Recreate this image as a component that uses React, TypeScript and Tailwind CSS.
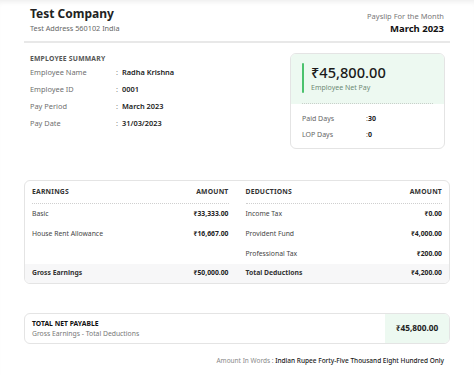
import React from 'react';

const font = { fontFamily: '"Noto Sans", "Open Sans", sans-serif' };

const summary = [
  ['Employee Name', 'Radha Krishna'],
  ['Employee ID', '0001'],
  ['Pay Period', 'March 2023'],
  ['Pay Date', '31/03/2023'],
];

const earnings = [
  ['Basic', '₹33,333.00'],
  ['House Rent Allowance', '₹16,667.00'],
];

const deductions = [
  ['Income Tax', '₹0.00'],
  ['Provident Fund', '₹4,000.00'],
  ['Professional Tax', '₹200.00'],
];

function Column({ title, rows }: { title: string; rows: string[][] }) {
  return (
    <div>
      <div className="h-[23px] pt-[1px] flex items-center justify-between border-b border-dotted border-[#cfcfcf] text-[6.8px] font-bold text-[#333] tracking-[0.2px]">
        <span>{title}</span>
        <span>AMOUNT</span>
      </div>
      {rows.map(([label, value]) => (
        <div key={label} className="h-[20px] flex items-center justify-between text-[6.8px]">
          <span className="text-[#444]">{label}</span>
          <span className="font-bold text-[#222]">{value}</span>
        </div>
      ))}
    </div>
  );
}

export default function App() {
  return (
    <div
      className="w-[474px] h-[375px] bg-white overflow-hidden shadow-[inset_0_5px_5px_-3px_rgba(0,0,0,0.07)]"
      style={font}
    >
      <div className="px-6 pt-[6px]">
        {/* Header */}
        <div className="flex justify-between items-start px-[6px] pb-[6px] border-b-2 border-[#e8e8e8]">
          <div>
            <div className="text-[12px] font-bold text-[#222] leading-[15px]">Test Company</div>
            <div className="text-[7.3px] text-[#666] leading-[10px] mt-[2px]">Test Address 560102 India</div>
          </div>
          <div className="text-right pt-[5px]">
            <div className="text-[7.5px] text-[#777] leading-[10px]">Payslip For the Month</div>
            <div className="text-[9.5px] font-bold text-[#111] leading-[13px] mt-[1px]">March 2023</div>
          </div>
        </div>

        {/* Summary + net pay */}
        <div className="flex justify-between mt-[10px] pl-[6px] pr-[5px]">
          <div className="pt-[1px]">
            <div className="text-[6.8px] font-bold text-[#555] tracking-[0.2px] leading-[10px]">EMPLOYEE SUMMARY</div>
            <div>
              {summary.map(([label, value]) => (
                <div key={label} className="flex items-center h-[17px] text-[7.4px]">
                  <span className="w-[86px] text-[#6f6f6f]">{label}</span>
                  <span className="text-[#888] w-[6px]">:</span>
                  <span className="text-[#222] font-semibold">{value}</span>
                </div>
              ))}
            </div>
          </div>

          <div className="w-[155px] h-[96px] border border-[#e4e4e4] rounded-[6px] overflow-hidden">
            <div className="bg-[#edf9f1] px-[11px] pt-[9px]">
              <div className="flex">
                <div className="w-[2px] bg-[#4cc26e] rounded-full mr-[7px]" />
                <div>
                  <div className="text-[14.6px] font-medium text-[#1a1a1a] leading-[18px]">₹45,800.00</div>
                  <div className="text-[7px] text-[#6d8a76] leading-[10px] mt-[2px]">Employee Net Pay</div>
                </div>
              </div>
              <div className="mt-[10px] border-b border-dotted border-[#c8cfca]" />
            </div>
            <div className="px-[11px] pt-[7px]">
              {[['Paid Days', '30'], ['LOP Days', '0']].map(([l, v]) => (
                <div key={l} className="flex items-center h-[16px] text-[7px]">
                  <span className="w-[64px] text-[#666]">{l}</span>
                  <span className="text-[#666]">:</span>
                  <span className="font-bold text-[#222]">{v}</span>
                </div>
              ))}
            </div>
          </div>
        </div>

        {/* Earnings / Deductions */}
        <div className="mt-[31px] border border-[#e4e4e4] rounded-[6px] overflow-hidden">
          <div className="grid grid-cols-2 gap-[17px] px-[7px]">
            <Column title="EARNINGS" rows={earnings} />
            <Column title="DEDUCTIONS" rows={deductions} />
          </div>
          <div className="grid grid-cols-2 gap-[17px] px-[7px] bg-[#f7f7f8] h-[19px] items-center text-[6.8px] font-bold text-[#333]">
            <div className="flex justify-between">
              <span>Gross Earnings</span>
              <span className="text-[#222]">₹50,000.00</span>
            </div>
            <div className="flex justify-between">
              <span>Total Deductions</span>
              <span className="text-[#222]">₹4,200.00</span>
            </div>
          </div>
        </div>

        {/* Net payable */}
        <div className="mt-[29px] h-[31px] border border-[#e4e4e4] rounded-[6px] overflow-hidden flex">
          <div className="flex-1 pl-[7px] flex flex-col justify-center">
            <div className="text-[6.8px] font-bold text-[#111] leading-[10px]">TOTAL NET PAYABLE</div>
            <div className="text-[6.8px] text-[#777] leading-[10px]">Gross Earnings - Total Deductions</div>
          </div>
          <div className="w-[64px] bg-[#edf9f1] flex items-center justify-center text-[8.3px] font-bold text-[#222]">
            ₹45,800.00
          </div>
        </div>

        {/* Amount in words */}
        <div className="mt-[12px] pr-[6px] text-right text-[6.5px] leading-[9px]">
          <span className="text-[#888]">Amount In Words : </span>
          <span className="font-medium text-[#222]">Indian Rupee Forty-Five Thousand Eight Hundred Only</span>
        </div>
      </div>
    </div>
  );
}
